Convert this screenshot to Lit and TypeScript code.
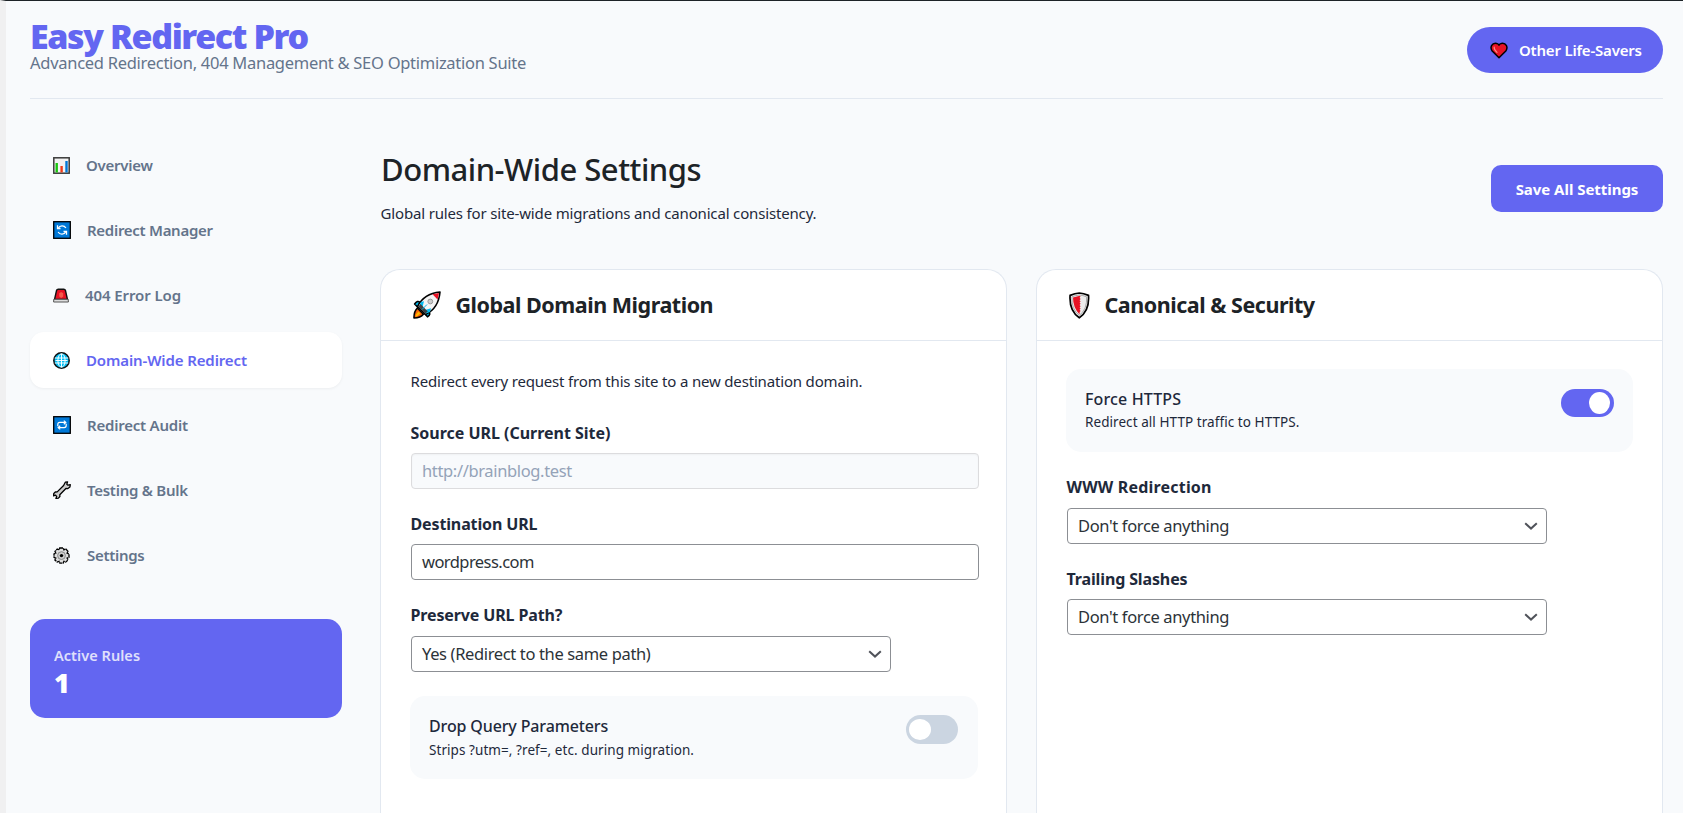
import { LitElement, html, css, svg } from "lit";
import { customElement, property } from "lit/decorators.js";
import { classMap } from "lit/directives/class-map.js";
import { styleMap } from "lit/directives/style-map.js";

const icons: Record<string, unknown> = {
  chart: svg`<rect x=".8" y=".8" width="15.4" height="15.4" fill="#f2f2f2" stroke="#3a3a3a" stroke-width="1.5"/>
    <path d="M3.7 15.4V6" stroke="#16c60c" stroke-width="2.4"/><path d="M8.6 15.4V9" stroke="#f03a17" stroke-width="2.4"/><path d="M13.5 15.4V4" stroke="#0078d7" stroke-width="2.4"/>`,
  refresh: svg`<rect x=".7" y=".7" width="16.6" height="16.6" fill="#0078d7" stroke="#000" stroke-width="1.3"/>
    <g fill="none" stroke="#fff" stroke-width="1.3"><path d="M5.2 7.2A4.4 4.4 0 0 1 12.9 7"/><path d="M12.8 10.8A4.4 4.4 0 0 1 5.1 11"/><path d="M4.5 4.3v3.2h3"/><path d="M13.5 13.7v-3.2h-3"/></g>`,
  siren: svg`<path d="M3.6 2.3Q4 1.2 5.2 1.2h5.6q1.2 0 1.6 1.1l2.1 9.2h-13z" fill="#e81224" stroke="#111" stroke-width="1.4"/>
    <path d="M6.2 8.5V5.2l2-1.2 2 1.2v3.3l-2 1.4z" fill="#f7594b"/><path d="M.8 11.3h14.4l.2 2.7H.6z" fill="#ddd" stroke="#555" stroke-width="1"/>`,
  globe: svg`<circle cx="8.5" cy="8.5" r="7.7" fill="#00bcf2" stroke="#111" stroke-width="1.5"/>
    <g fill="none" stroke="#fff" stroke-width=".95"><path d="M1.8 6h13.4M1.8 11h13.4M2.5 8.5h12M8.5 1.8v13.4"/><ellipse cx="8.5" cy="8.5" rx="3.6" ry="6.7"/></g>`,
  repeat: svg`<rect x=".7" y=".7" width="16.6" height="16.6" fill="#0078d7" stroke="#000" stroke-width="1.3"/>
    <g fill="none" stroke="#fff" stroke-width="1.2"><path d="M4.8 10.2V8.4Q4.8 6.4 6.8 6.4h6"/><path d="M13.2 7.8v1.8q0 2-2 2h-6"/><path d="M10.800 4.600 12.800 6.400l-2 1.800M7.200 9.800 5.200 11.600l2 1.800"/></g>`,
  wrench: svg`<path d="M12.3 1.2 14.6.9l-.8 2.3 1.2 1 2.3-.6-.4 2.5-2 1.5-2-.1-6.1 6.3.1 1.7-1.5 1.6-2.5.4.8-2.1-1.2-1.2-2 .6.3-2.4 1.5-1.4 1.9-.1 6.4-6.4z" fill="#ccc" stroke="#000" stroke-width="1.3" stroke-linejoin="round"/>`,
  gear: svg`<path d="M6.700 1h3.600l.6 1.800 2-.8L15 4.400l-.9 1.800 1.900.7v3.400l-1.900.7.9 1.900-2.300 2.200-1.800-.8-.7 1.800H6.800l-.7-1.800-1.900.8L1.900 13l.9-1.900L1 10.400V6.900l1.800-.7L2 4.400 4.200 2.100l1.900.7z" fill="#ddd" stroke="#000" stroke-width="1.3" stroke-dasharray="3.300 .5"/>
    <circle cx="8.5" cy="8.6" r="3.9" fill="#ccc" stroke="#888" stroke-width="1"/><circle cx="8.5" cy="8.6" r="1.7" fill="#000"/>`,
  heart: svg`<path d="M9 15.800 2.200 9Q.3 6.400 1.500 3.700 3.200.8 6.500 1.400 8.300 1.900 9 3.200 9.700 1.900 11.500 1.400 14.800.8 16.500 3.700 17.700 6.400 15.800 9z" fill="#e81224" stroke="#000" stroke-width="1.5" stroke-linejoin="round"/>
    <path d="M4.200 5.200Q3.800 7.500 7 10.400" fill="none" stroke="#f98b83" stroke-width="1.2" stroke-linecap="round"/>`,
  rocket: svg`<g stroke="#000" stroke-width="1.6" stroke-linejoin="round"><path d="M7 11.500Q4.500 8.800 1.600 13l3.400 3.500zM15.500 20q3 3.200-1 5.800l-3.400-3.800z" fill="#00bcf2"/>
    <path d="M1 27Q.8 20.500 4.400 17l6 6.200Q7.500 27 1 27z" fill="#f7630c"/>
    <path d="M4.500 15.500Q11 2.500 27 1 25.500 17.500 12.500 23.500z" fill="#f4f4f4"/></g>
    <path d="M2.500 25.500q.5-3 3-5l1.800 2q-2 2.500-4.800 3z" fill="#ffb900"/><path d="M11 10.200 8 11 6 15.500l3 2.500zM18 17.300l-1 3.700-4.200 1.600-2.400-3z" fill="#00bcf2"/>
    <path d="M5.300 15.800 7.600 13l7.200 7.400-2.600 2.200z" fill="#3f3f3f"/><path d="M19.500 3.200 26 1.900l-1.400 6.600z" fill="#e81224"/>
    <circle cx="17.300" cy="10.500" r="2.400" fill="#ccc" stroke="#999" stroke-width="1"/><path d="m9 18.500 5-5" stroke="#00bcf2" stroke-width="1"/>`,
  shield: svg`<path d="M10.300 1Q14.500 1.200 19.500 3.400 20.600 19 10.300 25.800 0 19 1.100 3.400 6 1.200 10.300 1z" fill="#eee" stroke="#000" stroke-width="1.7"/>
    <path d="M10.300 3Q13.800 3.200 17.600 4.800 18.300 17.500 10.300 23.400 2.300 17.500 3 4.800 6.800 3.200 10.300 3z" fill="#ececec" stroke="#aaa" stroke-width="1"/>
    <path d="M10.800 3.800 4 5.600Q4 16 10.600 22.500V20l1-1-1-1.200 1-1.200-1-1.200 1-1.200-1-1.200 1-1.200-1-1.200 1-1.200-1-1.200 1-1.200-1-1.200 1-1.200z" fill="#e81224"/>`,
};
const icon = (name: string, w: number, h: number) =>
  html`<svg class="icon" width=${w} height=${h} viewBox="0 0 ${w} ${h}" aria-hidden="true">${icons[name]}</svg>`;

const NAV = [
  { icon: "chart", label: "Overview", w: 17, h: 17, space: -0.24 },
  { icon: "refresh", label: "Redirect Manager", w: 18, h: 18, space: -0.286 },
  { icon: "siren", label: "404 Error Log", w: 16, h: 15, space: -0.1 },
  { icon: "globe", label: "Domain-Wide Redirect", w: 17, h: 17, space: -0.121, active: true },
  { icon: "repeat", label: "Redirect Audit", w: 18, h: 18, space: -0.226 },
  { icon: "wrench", label: "Testing & Bulk", w: 18, h: 18, space: -0.263 },
  { icon: "gear", label: "Settings", w: 18, h: 17, space: -0.3 },
];

@customElement("toggle-row")
class ToggleRow extends LitElement {
  @property() heading = "";
  @property() hint = "";
  @property({ type: Boolean }) on = false;
  static styles = css`
    :host { display: flex; box-sizing: border-box; height: 83px; padding: 18px 20px 0 19px; justify-content: space-between; background: #f8fafc; border-radius: 15px; color: #1e293b; }
    .name { font-size: 16px; line-height: 24px; font-weight: 500; letter-spacing: -0.13px; }
    .on .name { letter-spacing: 0.13px; }
    .hint { font-size: 13.5px; line-height: 20px; margin-top: 1.5px; letter-spacing: 0.067px; }
    .on .hint { margin-top: 1px; }
    .switch { box-sizing: border-box; width: 52px; height: 29px; margin-top: 1px; padding: 4px 3px; border-radius: 15px; background: #cbd5e1; display: flex; }
    .switch.on { width: 53px; height: 28px; margin-top: 2px; margin-right: -1px; padding: 3px 4px; background: #6366f1; justify-content: flex-end; }
    .knob { width: 22px; height: 21px; border-radius: 50%; background: #fff; }
    .on .knob { width: 21px; height: 22px; }
  `;
  render() {
    return html`<div class=${classMap({ on: this.on })}><div class="name">${this.heading}</div><div class="hint">${this.hint}</div></div>
      <div class=${classMap({ switch: true, on: this.on })}><div class="knob"></div></div>`;
  }
}

@customElement("app-root")
class AppRoot extends LitElement {
  static styles = css`
    :host { display: block; font-family: "Noto Sans", "Open Sans", sans-serif; color: #1e293b; }
    * { box-sizing: border-box; }
    h1, h2, p { margin: 0; }
    .icon { flex: none; display: block; }
    .frame { height: 813px; overflow: hidden; border-top: 1px solid #1d2327; border-left: 6px solid #f0f0f1; background: #f8fafc; padding: 0 20px 0 24px; white-space: nowrap; display: flex; flex-direction: column; }
    .top { flex: none; height: 98px; display: flex; justify-content: space-between; align-items: flex-start; border-bottom: 1px solid #e2e8f0; padding-top: 15px; }
    .brand { font-size: 34px; line-height: 36px; margin-top: 2px; font-weight: 900; letter-spacing: -1.4px; color: #6366f1; }
    .tagline { font-size: 16.5px; line-height: 18px; letter-spacing: -0.28px; color: #64748b; }
    .btn { display: flex; align-items: center; background: #6366f1; color: #fff; }
    .savers { width: 196px; height: 46px; margin-top: 11px; border-radius: 23px; padding-left: 23px; gap: 11px; font-size: 15px; font-weight: 600; letter-spacing: -0.2px; }
    .save { width: 172px; height: 47px; margin-top: 66px; border-radius: 10px; justify-content: center; font-size: 15px; font-weight: 700; letter-spacing: -0.04px; }
    .body { flex: 1; min-height: 0; display: flex; gap: 38px; }
    .side { width: 312px; padding-top: 38px; }
    .nav { display: flex; flex-direction: column; gap: 9px; }
    .item { height: 56px; display: flex; align-items: center; gap: 16px; padding-left: 23px; border-radius: 14px; color: #64748b; font-size: 15px; font-weight: 600; }
    .item.active { background: #fff; color: #6366f1; box-shadow: 0 1px 3px rgba(0, 0, 0, 0.05); }
    .rules { margin-top: 36px; height: 99px; border-radius: 15px; background: #6366f1; padding: 24px 24px 0; color: #fff; }
    .rules-label { font-size: 14.5px; line-height: 24px; font-weight: 600; opacity: 0.8; letter-spacing: 0.05px; }
    .rules-count { font-size: 27px; line-height: 31px; font-weight: 900; }
    .main { flex: 1; min-width: 0; display: flex; flex-direction: column; }
    .head { flex: none; height: 170px; display: flex; justify-content: space-between; align-items: flex-start; }
    h1 { margin-top: 50px; padding-left: 1px; font-size: 31px; line-height: 40px; font-weight: 500; letter-spacing: -0.48px; color: #1d2327; }
    .lead { font-size: 15px; line-height: 24px; letter-spacing: -0.16px; padding-left: 0.5px; }
    .head .lead { margin-top: 12px; }
    .cards { flex: 1; min-height: 0; display: grid; grid-template-columns: 1fr 1fr; gap: 29px; }
    .card { border: 1px solid #e2e8f0; border-bottom: 0; border-radius: 20px 20px 0 0; background: #fff; min-width: 0; }
    .card-head { height: 71px; border-bottom: 1px solid #e2e8f0; display: flex; align-items: center; gap: 14.5px; padding-left: 32px; }
    h2 { font-size: 21.5px; line-height: 30px; font-weight: 700; color: #1d2327; letter-spacing: -0.47px; }
    .card-body { padding: 28px 29px 0; }
    .migration .card-body { padding-right: 28px; }
    .card-body .lead { margin-bottom: 28px; letter-spacing: -0.172px; }
    .label { font-size: 16px; line-height: 24px; font-weight: 700; margin: 23px 0 8px; padding-left: 0.5px; letter-spacing: -0.13px; }
    .lead + .label { margin-top: 0; letter-spacing: -0.015px; }
    .label.roomy { margin-bottom: 9px; }
    .label.wide { letter-spacing: 0.19px; }
    .control { height: 36px; margin-left: 1px; width: 100%; border: 1px solid #8c8f94; border-radius: 4px; background: #fff; display: flex; align-items: center; justify-content: space-between; padding: 0 10px 1px; font-size: 16.5px; letter-spacing: -0.36px; color: #2c3338; }
    .control.dest { letter-spacing: -0.56px; }
    .control.disabled { background: #f8fafc; border-color: #dcdcde; color: #94a3b8; box-shadow: inset 0 1px 2px rgba(0, 0, 0, 0.04); }
    .control.select { width: 480px; }
    .control.select svg { margin-right: -1.5px; }
    toggle-row.below { margin-top: 24px; }
  `;
  select(text: string) {
    return html`<div class="control select"><span>${text}</span>
      <svg width="14" height="8" viewBox="0 0 14 8"><path d="m1.200 1.200 5.800 5.400 5.800-5.400" fill="none" stroke="#50535a" stroke-width="2"/></svg></div>`;
  }
  render() {
    return html`<div class="frame">
      <header class="top">
        <div><div class="brand">Easy Redirect Pro</div><div class="tagline">Advanced Redirection, 404 Management &amp; SEO Optimization Suite</div></div>
        <div class="btn savers">${icon("heart", 18, 17)}<span>Other Life-Savers</span></div>
      </header>
      <div class="body">
        <aside class="side">
          <nav class="nav">${NAV.map((n) => html`<div class=${classMap({ item: true, active: !!n.active })} style=${styleMap({ letterSpacing: `${n.space}px` })}>${icon(n.icon, n.w, n.h)}<span>${n.label}</span></div>`)}</nav>
          <div class="rules"><div class="rules-label">Active Rules</div><div class="rules-count">1</div></div>
        </aside>
        <main class="main">
          <div class="head">
            <div><h1>Domain-Wide Settings</h1><p class="lead">Global rules for site-wide migrations and canonical consistency.</p></div>
            <div class="btn save">Save All Settings</div>
          </div>
          <div class="cards">
            <section class="card migration">
              <div class="card-head">${icon("rocket", 28, 28)}<h2>Global Domain Migration</h2></div>
              <div class="card-body">
                <p class="lead">Redirect every request from this site to a new destination domain.</p>
                <div class="label">Source URL (Current Site)</div>
                <div class="control disabled">http://brainblog.test</div>
                <div class="label">Destination URL</div>
                <div class="control dest">wordpress.com</div>
                <div class="label roomy">Preserve URL Path?</div>
                ${this.select("Yes (Redirect to the same path)")}
                <toggle-row class="below" heading="Drop Query Parameters" hint="Strips ?utm=, ?ref=, etc. during migration."></toggle-row>
              </div>
            </section>
            <section class="card">
              <div class="card-head">${icon("shield", 21, 27)}<h2>Canonical &amp; Security</h2></div>
              <div class="card-body">
                <toggle-row on heading="Force HTTPS" hint="Redirect all HTTP traffic to HTTPS."></toggle-row>
                <div class="label wide roomy">WWW Redirection</div>
                ${this.select("Don't force anything")}
                <div class="label">Trailing Slashes</div>
                ${this.select("Don't force anything")}
              </div>
            </section>
          </div>
        </main>
      </div>
    </div>`;
  }
}
